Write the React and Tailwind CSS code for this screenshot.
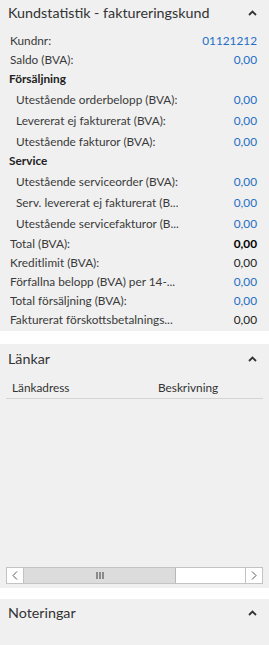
import React from "react";

const blue = "text-[#1f6fc5]";

function Chevron() {
  return (
    <svg width="9" height="6" viewBox="0 0 9 6" className="block">
      <path d="M1 5 L4.5 1.5 L8 5" fill="none" stroke="#333" strokeWidth="1.8" />
    </svg>
  );
}

function Row({ label, value, h, indent, valueBlue, valueBold }) {
  return (
    <div className={`flex items-center justify-between ${h} ${indent ? "pl-[16px]" : "pl-[10px]"} pr-[12px]`}>
      <span className="truncate">{label}</span>
      <span className={`${valueBlue ? blue : "text-[#222]"} ${valueBold ? "font-bold text-black" : ""}`}>{value}</span>
    </div>
  );
}

export default function App() {
  return (
    <div className="w-[269px] h-[645px] bg-white overflow-hidden text-[11.8px] text-[#3a3a3a]" style={{ fontFamily: 'Lato, "Noto Sans", sans-serif' }}>
      {/* Panel 1 */}
      <div className="bg-[#f0f0f0] h-[331px] flex flex-col">
        <div className="h-[31px] flex items-start justify-between pl-[8px] pr-[12px] pt-[3px]">
          <span className="text-[14.3px] leading-[20px] text-[#333]">Kundstatistik - faktureringskund</span>
          <div className="pt-[7px]"><Chevron /></div>
        </div>
        <Row h="h-[19px]" label="Kundnr:" value="01121212" valueBlue />
        <Row h="h-[19px]" label="Saldo (BVA):" value="0,00" valueBlue />
        <div className="h-[19px] flex items-center pl-[9px] font-bold text-[#222]">Försäljning</div>
        <div className="pt-[1px]">
          <Row h="h-[21px]" indent label="Utestående orderbelopp (BVA):" value="0,00" valueBlue />
          <Row h="h-[21px]" indent label="Levererat ej fakturerat (BVA):" value="0,00" valueBlue />
          <Row h="h-[21px]" indent label="Utestående fakturor (BVA):" value="0,00" valueBlue />
        </div>
        <div className="h-[18px] flex items-center pl-[9px] font-bold text-[#222]">Service</div>
        <div className="pt-[1px]">
          <Row h="h-[21px]" indent label="Utestående serviceorder (BVA):" value="0,00" valueBlue />
          <Row h="h-[21px]" indent label="Serv. levererat ej fakturerat (B..." value="0,00" valueBlue />
          <Row h="h-[21px]" indent label="Utestående servicefakturor (B..." value="0,00" valueBlue />
        </div>
        <Row h="h-[19px]" label="Total (BVA):" value="0,00" valueBold />
        <Row h="h-[19px]" label="Kreditlimit (BVA):" value="0,00" />
        <Row h="h-[19px]" label="Förfallna belopp (BVA) per 14-..." value="0,00" valueBlue />
        <Row h="h-[19px]" label="Total försäljning (BVA):" value="0,00" valueBlue />
        <Row h="h-[20px]" label="Fakturerat förskottsbetalnings..." value="0,00" />
      </div>
      <div className="h-[13px]" />
      {/* Panel 2 */}
      <div className="bg-[#f0f0f0] h-[244px] flex flex-col">
        <div className="h-[30px] flex items-center justify-between pl-[8px] pr-[12px]">
          <span className="text-[14.3px] leading-[20px] text-[#333]">Länkar</span>
          <Chevron />
        </div>
        <div className="mx-[6px] mt-[4px] h-[21px] flex items-center border-b border-[#d4d4d4] text-[#333]">
          <span className="pl-[6px] w-[152px]">Länkadress</span>
          <span>Beskrivning</span>
        </div>
        <div className="flex-1" />
        <div className="mx-[6px] mb-[4px] h-[17px] flex border border-[#c3c3c3] bg-white">
          <div className="w-[17px] flex items-center justify-center border-r border-[#c3c3c3]">
            <svg width="6" height="9" viewBox="0 0 6 9"><path d="M5 0.5 L1 4.5 L5 8.5" fill="none" stroke="#555" strokeWidth="1" /></svg>
          </div>
          <div className="w-[152px] bg-[#dcdcdc] border-r border-[#b8b8b8] flex items-center justify-center">
            <svg width="8" height="7" viewBox="0 0 8 7"><path d="M1 0 V7 M4 0 V7 M7 0 V7" stroke="#555" strokeWidth="1.2" /></svg>
          </div>
          <div className="flex-1" />
          <div className="w-[17px] flex items-center justify-center border-l border-[#c3c3c3]">
            <svg width="6" height="9" viewBox="0 0 6 9"><path d="M1 0.5 L5 4.5 L1 8.5" fill="none" stroke="#555" strokeWidth="1" /></svg>
          </div>
        </div>
      </div>
      <div className="h-[11px]" />
      {/* Panel 3 */}
      <div className="bg-[#f0f0f0] h-[46px]">
        <div className="h-[28px] flex items-center justify-between pl-[8px] pr-[12px]">
          <span className="text-[14.3px] leading-[20px] text-[#333]">Noteringar</span>
          <Chevron />
        </div>
      </div>
    </div>
  );
}
